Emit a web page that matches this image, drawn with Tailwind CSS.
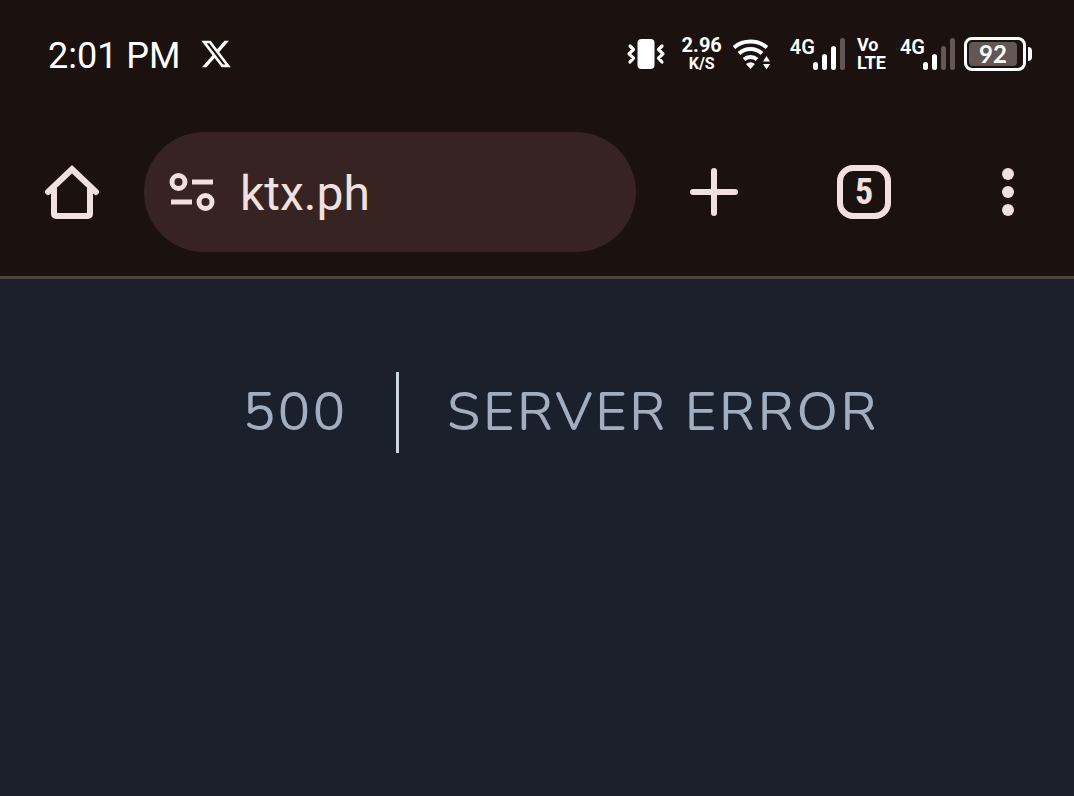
<!DOCTYPE html>
<html lang="en">
  <head>
    <meta charset="UTF-8" />
    <meta name="viewport" content="width=device-width, initial-scale=1.0" />
    <title>Server Error</title>
    <script src="https://cdn.jsdelivr.net/npm/@tailwindcss/browser@4"></script>
  </head>
  <body class="min-h-screen flex flex-col bg-[#1a202c] font-[Roboto,sans-serif]">
    <!-- Status bar -->
    <div class="h-27 pl-12 pr-[42px] flex items-center justify-between bg-[#1b110f] text-white">
      <div class="flex items-center gap-5">
        <time class="pt-1 text-4xl leading-10">2:01 PM</time>
        <svg class="w-[30px] h-7" viewBox="1 2 22 20" fill="currentColor" aria-label="X">
          <path d="M18.244 2.25h3.308l-7.227 8.26 8.502 11.24H16.17l-5.214-6.817L4.99 21.75H1.68l7.73-8.835L1.254 2.25H8.08l4.713 6.231zm-1.161 17.52h1.833L7.084 4.126H5.117z" />
        </svg>
      </div>

      <div class="flex items-center">
        <svg class="w-10 h-8" viewBox="0 0 40 32" fill="none" stroke="currentColor" stroke-width="3.2" stroke-linecap="round" stroke-linejoin="round" aria-label="Vibrate">
          <rect x="11.5" y="1" width="17" height="30" rx="4" fill="currentColor" stroke="none" />
          <path d="M4 8l3.500 3.500-4.500 4.300 4.500 4.300L4 24M36 8l-3.500 3.500 4.500 4.300-4.500 4.300L36 24" />
        </svg>

        <div class="ml-4 flex flex-col items-center font-bold">
          <span class="text-xl leading-5">2.96</span>
          <span class="text-base leading-[18px]">K/S</span>
        </div>

        <svg class="ml-2.5 w-10 h-8" viewBox="0 0 40 32" fill="none" stroke="currentColor" stroke-width="4" aria-label="Wi-Fi">
          <path d="M2 9.500A26 26 0 0 1 35 9.500" />
          <path d="M7 15.500A17 17 0 0 1 30 15.500" />
          <path d="M12 21.500A10 10 0 0 1 25 21.500" />
          <path d="M14 26Q18.500 22.500 23 26L18.500 31Z" fill="currentColor" stroke="none" />
          <path d="M31 23.500L34.500 18 38 23.500ZM31 26L34.500 31.500 38 26Z" fill="currentColor" stroke="none" />
        </svg>

        <div class="ml-4.5 flex items-start">
          <span class="text-xl leading-[18px] font-semibold">4G</span>
          <svg class="-ml-0.5 w-8 h-8" viewBox="0 0 32 32" fill="currentColor" aria-label="Signal 3 of 4">
            <rect x="0" y="24" width="5" height="8" rx="2.5" />
            <rect x="9" y="16" width="5" height="16" rx="2.5" />
            <rect x="18" y="8" width="5" height="24" rx="2.5" />
            <rect x="27" y="0" width="5" height="32" rx="2.5" fill="#625755" />
          </svg>
        </div>

        <div class="ml-3 flex flex-col text-lg leading-[18px] font-bold">
          <span>Vo</span>
          <span>LTE</span>
        </div>

        <div class="ml-3.5 flex items-start">
          <span class="text-xl leading-[18px] font-semibold">4G</span>
          <svg class="-ml-0.5 w-8 h-8" viewBox="0 0 32 32" fill="currentColor" aria-label="Signal 2 of 4">
            <rect x="0" y="24" width="5" height="8" rx="2.5" />
            <rect x="9" y="16" width="5" height="16" rx="2.5" />
            <rect x="18" y="8" width="5" height="24" rx="2.5" fill="#625755" />
            <rect x="27" y="0" width="5" height="32" rx="2.5" fill="#625755" />
          </svg>
        </div>

        <div class="ml-[9px] flex items-center gap-0.5">
          <div class="w-[62px] h-[34px] p-0.5 border-3 border-white rounded-lg">
            <div class="w-12 h-6 flex items-center justify-center rounded-sm bg-[#625755] font-[Lato,sans-serif] text-2xl leading-6 font-bold">92</div>
          </div>
          <div class="w-1 h-3.5 rounded-r-sm bg-white"></div>
        </div>
      </div>
    </div>

    <!-- Browser toolbar -->
    <header class="h-[171px] flex items-center bg-[#1b110f] border-b-3 border-[#4f4342] text-[#f0e0df]">
      <button type="button" class="w-36 h-30 flex items-center justify-center" aria-label="Home">
        <svg class="size-[54px]" viewBox="0 0 54 54" fill="none" stroke="currentColor" stroke-width="6" stroke-linecap="round">
          <path d="M3 27L27 4.200L51 27" />
          <path d="M9 24V49a2 2 0 0 0 2 2H43a2 2 0 0 0 2-2V24" />
        </svg>
      </button>

      <div class="flex-1 min-w-0 h-30 px-6 flex items-center gap-6 rounded-full bg-[#362322]">
        <button type="button" class="shrink-0" aria-label="Site settings">
          <svg class="size-12" viewBox="0 0 48 48" fill="none" stroke="currentColor" stroke-width="5">
            <circle cx="10.500" cy="14" r="6.500" />
            <path d="M24 14H45M3 34H24" />
            <circle cx="37.500" cy="34" r="6.500" />
          </svg>
        </button>
        <input type="text" value="ktx.ph" aria-label="Address" class="flex-1 min-w-0 pt-1 text-5xl leading-14 outline-none" />
      </div>

      <button type="button" class="ml-1.5 w-36 h-30 flex items-center justify-center" aria-label="New tab">
        <svg class="size-12" viewBox="0 0 48 48" fill="none" stroke="currentColor" stroke-width="6" stroke-linecap="round">
          <path d="M24 3V45M3 24H45" />
        </svg>
      </button>
      <button type="button" class="ml-1.5 w-36 h-30 flex items-center justify-center" aria-label="Tabs">
        <span class="size-[54px] flex items-center justify-center border-6 border-current rounded-2xl font-['Roboto_Condensed',Roboto,sans-serif] text-4xl font-bold">5</span>
      </button>
      <button type="button" class="w-[138px] h-30 pl-1.5 flex items-center justify-center" aria-label="Menu">
        <svg class="w-3 h-12" viewBox="0 0 12 48" fill="currentColor">
          <circle cx="6" cy="6" r="6" />
          <circle cx="6" cy="24" r="6" />
          <circle cx="6" cy="42" r="6" />
        </svg>
      </button>
    </header>

    <!-- Error page -->
    <main class="flex-1 pt-[93px] flex items-start justify-center font-[Nunito,Lato,sans-serif] text-[54px] leading-[81px] tracking-wider text-[#a0aec0]">
      <div class="px-12 border-r-3 border-[#cbd5e0]">500</div>
      <h1 class="ml-12 uppercase">Server Error</h1>
    </main>
  </body>
</html>
